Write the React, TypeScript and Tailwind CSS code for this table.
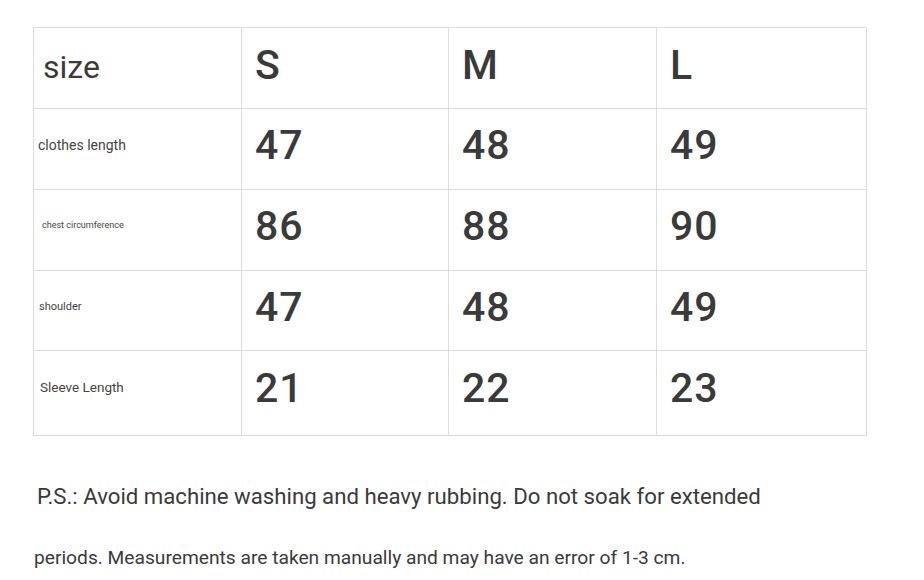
import React from 'react';

const sizes = ['S', 'M', 'L'];

const rows = [
  { label: 'clothes length', labelClass: 'text-[14px] pl-[4px] pb-[8px]', numPad: 'pb-[6px]', values: ['47', '48', '49'], h: 'h-[81px]' },
  { label: 'chest circumference', labelClass: 'text-[9px] pl-[8px] pb-[8px]', numPad: 'pb-[6px]', values: ['86', '88', '90'], h: 'h-[81px]' },
  { label: 'shoulder', labelClass: 'text-[11px] pl-[5px] pb-[6px]', numPad: 'pb-[6px]', values: ['47', '48', '49'], h: 'h-[80px]' },
  { label: 'Sleeve Length', labelClass: 'text-[13.5px] pl-[6px] pb-[12px]', numPad: 'pb-[9px]', values: ['21', '22', '23'], h: 'h-[85px]' },
];

export default function App() {
  return (
    <div className="w-[924px] h-[580px] bg-white overflow-hidden text-[#3a3a3a] font-['Roboto','Liberation_Sans',sans-serif]">
      <div className="pt-[27px] pl-[33px]">
        {/* size table */}
        <div className="w-[833px] grid grid-cols-[208px_207px_208px_210px] border-t border-l border-[#dcdcdc]">
          <div className="h-[81px] border-r border-b border-[#dcdcdc] flex items-center pl-[9px] pb-[3px] text-[32px]">
            size
          </div>
          {sizes.map((s) => (
            <div
              key={s}
              className="h-[81px] border-r border-b border-[#dcdcdc] flex items-center pl-[13px] pb-[4px] text-[41px] font-medium"
            >
              {s}
            </div>
          ))}

          {rows.map((row) => (
            <React.Fragment key={row.label}>
              <div className={`${row.h} border-r border-b border-[#dcdcdc] flex items-center text-[#444] ${row.labelClass}`}>
                {row.label}
              </div>
              {row.values.map((v, i) => (
                <div
                  key={i}
                  className={`${row.h} ${row.numPad} border-r border-b border-[#dcdcdc] flex items-center pl-[13px] text-[41px] font-medium tracking-[1px]`}
                >
                  {v}
                </div>
              ))}
            </React.Fragment>
          ))}
        </div>

        {/* care notes */}
        <p className="mt-[48px] pl-[4px] text-[22.2px] leading-[24px] whitespace-nowrap">
          P.S.: Avoid machine washing and heavy rubbing. Do not soak for extended
        </p>
        <p className="mt-[38px] pl-[1px] text-[19.2px] leading-[24px] whitespace-nowrap">
          periods. Measurements are taken manually and may have an error of 1-3 cm.
        </p>
      </div>
    </div>
  );
}
